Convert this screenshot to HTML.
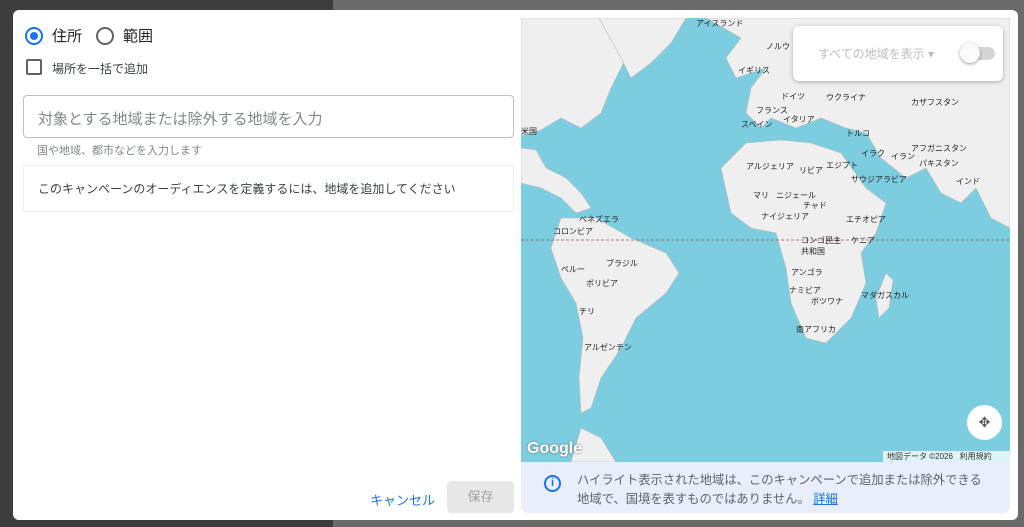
<!DOCTYPE html>
<html><head><meta charset="utf-8"><style>
*{margin:0;padding:0;box-sizing:border-box}
body{width:1024px;height:527px;overflow:hidden;background:#3d3d3d;font-family:"Liberation Sans","Noto Sans CJK JP",sans-serif;position:relative}
.bgr{position:absolute;left:333px;top:0;width:691px;height:527px;background:#6a6a6a}
.dlg{position:absolute;left:13px;top:10px;width:1005px;height:510px;background:#fff;border-radius:6px;overflow:hidden}
.t{position:absolute;color:#3c4043;white-space:nowrap}
.map{position:absolute;left:508px;top:8px;width:489px;height:444px;background:#7dcde0;overflow:hidden}
.lbl{position:absolute;font-size:8px;color:#222;white-space:nowrap}
</style></head><body>
<div class="bgr"></div>
<div class="dlg">
 <div style="position:absolute;left:12px;top:17px;width:18px;height:18px;border:2px solid #1a73e8;border-radius:50%"><div style="position:absolute;left:3px;top:3px;width:8px;height:8px;border-radius:50%;background:#1a73e8"></div></div>
 <div class="t" style="left:39px;top:15px;font-size:15px;color:#202124">住所</div>
 <div style="position:absolute;left:83px;top:17px;width:18px;height:18px;border:2px solid #5f6368;border-radius:50%"></div>
 <div class="t" style="left:110px;top:15px;font-size:15px;color:#202124">範囲</div>
 <div style="position:absolute;left:13px;top:49px;width:16px;height:16px;border:2px solid #5f6368;border-radius:2px"></div>
 <div class="t" style="left:39px;top:50px;font-size:12px">場所を一括で追加</div>
 <div style="position:absolute;left:10px;top:85px;width:491px;height:43px;border:1px solid #bdc1c6;border-radius:4px"></div>
 <div class="t" style="left:25px;top:98px;font-size:15px;color:#80868b">対象とする地域または除外する地域を入力</div>
 <div class="t" style="left:24px;top:132px;font-size:11px;color:#80868b">国や地域、都市などを入力します</div>
 <div style="position:absolute;left:10px;top:155px;width:491px;height:47px;border:1px solid #eceff1"></div>
 <div class="t" style="left:25px;top:170px;font-size:12px">このキャンペーンのオーディエンスを定義するには、地域を追加してください</div>
 <div class="t" style="left:357px;top:480px;font-size:13px;color:#1a73e8">キャンセル</div>
 <div style="position:absolute;left:434px;top:471px;width:67px;height:32px;background:#e8e8e8;border-radius:4px;color:#a0a0a0;font-size:13px;text-align:center;line-height:32px">保存</div>
 <div class="map">
  <svg width="489" height="444" style="position:absolute;left:0;top:0">
   <g fill="#efefef" stroke="#bbb" stroke-width=".6">
    <path d="M0 0 L95 0 L105 40 L90 70 L80 95 L60 110 L40 100 L20 112 L0 118 Z"/>
    <path d="M0 130 L15 132 L25 150 L45 160 L60 175 L70 190 L55 195 L40 180 L20 170 L0 165 Z"/>
    <path d="M78 0 L165 0 L150 25 L130 45 L110 60 L100 40 Z"/>
    <path d="M185 0 L489 0 L489 210 L470 200 L455 170 L440 185 L420 175 L405 150 L385 160 L360 140 L345 115 L325 110 L300 100 L275 110 L250 100 L240 110 L225 95 L230 70 L245 50 L215 60 L205 40 L220 20 Z"/>
    <path d="M200 150 L225 125 L260 122 L290 125 L320 135 L345 170 L365 185 L355 215 L340 235 L345 265 L330 300 L305 325 L285 320 L270 285 L265 250 L255 215 L230 210 L210 195 Z"/>
    <path d="M365 255 L372 262 L368 290 L358 300 L355 280 Z"/>
    <path d="M40 200 L75 200 L110 220 L145 235 L158 255 L145 275 L115 300 L100 330 L80 360 L70 390 L60 395 L58 360 L62 320 L55 285 L40 260 L30 230 Z"/>
    <path d="M60 410 L80 420 L95 444 L50 444 Z"/>
   </g>
   <line x1="0" y1="222" x2="489" y2="222" stroke="#a05050" stroke-width=".8" stroke-dasharray="3,2"/>
  </svg>
  <div class="lbl" style="left:175px;top:0">アイスランド</div>
  <div class="lbl" style="left:245px;top:23px">ノルウ</div>
  <div class="lbl" style="left:217px;top:47px">イギリス</div>
  <div class="lbl" style="left:260px;top:73px">ドイツ</div>
  <div class="lbl" style="left:305px;top:74px">ウクライナ</div>
  <div class="lbl" style="left:390px;top:79px">カザフスタン</div>
  <div class="lbl" style="left:235px;top:87px">フランス</div>
  <div class="lbl" style="left:220px;top:101px">スペイン</div>
  <div class="lbl" style="left:262px;top:96px">イタリア</div>
  <div class="lbl" style="left:325px;top:110px">トルコ</div>
  <div class="lbl" style="left:0;top:108px">米国</div>
  <div class="lbl" style="left:390px;top:125px">アフガニスタン</div>
  <div class="lbl" style="left:340px;top:130px">イラク</div>
  <div class="lbl" style="left:370px;top:133px">イラン</div>
  <div class="lbl" style="left:398px;top:140px">パキスタン</div>
  <div class="lbl" style="left:225px;top:143px">アルジェリア</div>
  <div class="lbl" style="left:278px;top:147px">リビア</div>
  <div class="lbl" style="left:305px;top:142px">エジプト</div>
  <div class="lbl" style="left:330px;top:156px">サウジアラビア</div>
  <div class="lbl" style="left:435px;top:158px">インド</div>
  <div class="lbl" style="left:232px;top:172px">マリ</div>
  <div class="lbl" style="left:255px;top:172px">ニジェール</div>
  <div class="lbl" style="left:282px;top:182px">チャド</div>
  <div class="lbl" style="left:240px;top:193px">ナイジェリア</div>
  <div class="lbl" style="left:325px;top:196px">エチオピア</div>
  <div class="lbl" style="left:58px;top:196px">ベネズエラ</div>
  <div class="lbl" style="left:32px;top:208px">コロンビア</div>
  <div class="lbl" style="left:280px;top:217px">コンゴ民主<br>共和国</div>
  <div class="lbl" style="left:330px;top:217px">ケニア</div>
  <div class="lbl" style="left:85px;top:240px">ブラジル</div>
  <div class="lbl" style="left:40px;top:246px">ペルー</div>
  <div class="lbl" style="left:65px;top:260px">ボリビア</div>
  <div class="lbl" style="left:270px;top:249px">アンゴラ</div>
  <div class="lbl" style="left:268px;top:267px">ナミビア</div>
  <div class="lbl" style="left:290px;top:278px">ボツワナ</div>
  <div class="lbl" style="left:340px;top:272px">マダガスカル</div>
  <div class="lbl" style="left:58px;top:288px">チリ</div>
  <div class="lbl" style="left:275px;top:306px">南アフリカ</div>
  <div class="lbl" style="left:63px;top:324px">アルゼンチン</div>
  <div style="position:absolute;left:272px;top:8px;width:210px;height:55px;background:#fff;border-radius:6px;box-shadow:0 1px 4px rgba(0,0,0,.3)"></div>
  <div class="t" style="left:297px;top:27px;font-size:12px;color:#bdbdbd">すべての地域を表示 ▾</div>
  <div style="position:absolute;left:442px;top:29px;width:32px;height:13px;border-radius:7px;background:#d5d5d5"></div>
  <div style="position:absolute;left:439px;top:25px;width:20px;height:20px;border-radius:50%;background:#fafafa;box-shadow:0 1px 3px rgba(0,0,0,.4)"></div>
  <div style="position:absolute;left:446px;top:387px;width:35px;height:35px;border-radius:50%;background:#fff;text-align:center;line-height:35px;font-size:14px;color:#555">✥</div>
  <div style="position:absolute;left:6px;top:422px;font-size:16px;font-weight:bold;color:#fff;text-shadow:0 0 2px #666">Google</div>
  <div style="position:absolute;left:362px;top:433px;width:127px;height:11px;background:rgba(255,255,255,.75);font-size:8px;color:#333;line-height:11px;padding-left:4px">地図データ ©2026 &nbsp; 利用規約</div>
 </div>
 <div style="position:absolute;left:508px;top:452px;width:489px;height:51px;background:#e8eefc;border-radius:0 0 6px 6px"></div>
 <div style="position:absolute;left:531px;top:465px;width:17px;height:17px;border:2px solid #1a73e8;border-radius:50%;color:#1a73e8;font-size:11px;font-weight:bold;text-align:center;line-height:13px">i</div>
 <div class="t" style="left:564px;top:461px;font-size:12.3px;line-height:19px;color:#5f6368">ハイライト表示された地域は、このキャンペーンで追加または除外できる<br>地域で、国境を表すものではありません。 <span style="color:#1a73e8;text-decoration:underline">詳細</span></div>
</div>
</body></html>
